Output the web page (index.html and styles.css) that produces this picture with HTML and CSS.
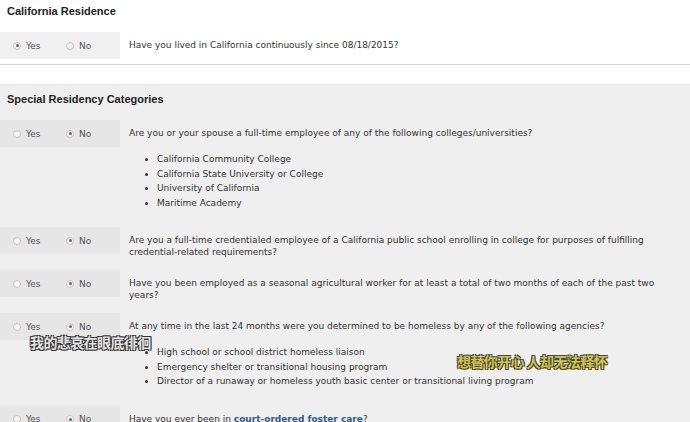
FILE: index.html
```html
<!DOCTYPE html>
<html>
<head>
<meta charset="utf-8">
<link rel="stylesheet" href="styles.css">
</head>
<body>
<div class="page">
  <section class="top">
    <h2 class="title">California Residence</h2>
    <div class="row">
      <div class="opts">
        <label class="opt"><span class="radio on"></span>Yes</label>
        <label class="opt"><span class="radio"></span>No</label>
      </div>
      <div class="q">Have you lived in California continuously since 08/18/2015?</div>
    </div>
  </section>
  <div class="gap"></div>
  <section class="grey">
    <h2 class="title">Special Residency Categories</h2>

    <div class="row">
      <div class="opts">
        <label class="opt"><span class="radio"></span>Yes</label>
        <label class="opt"><span class="radio on"></span>No</label>
      </div>
      <div class="q">Are you or your spouse a full-time employee of any of the following colleges/universities?
        <ul>
          <li>California Community College</li>
          <li>California State University or College</li>
          <li>University of California</li>
          <li>Maritime Academy</li>
        </ul>
      </div>
    </div>

    <div class="row">
      <div class="opts">
        <label class="opt"><span class="radio"></span>Yes</label>
        <label class="opt"><span class="radio on"></span>No</label>
      </div>
      <div class="q">Are you a full-time credentialed employee of a California public school enrolling in college for purposes of fulfilling credential-related requirements?</div>
    </div>

    <div class="row">
      <div class="opts">
        <label class="opt"><span class="radio"></span>Yes</label>
        <label class="opt"><span class="radio on"></span>No</label>
      </div>
      <div class="q">Have you been employed as a seasonal agricultural worker for at least a total of two months of each of the past two years?</div>
    </div>

    <div class="row">
      <div class="opts">
        <label class="opt"><span class="radio"></span>Yes</label>
        <label class="opt"><span class="radio on"></span>No</label>
      </div>
      <div class="q">At any time in the last 24 months were you determined to be homeless by any of the following agencies?
        <ul>
          <li>High school or school district homeless liaison</li>
          <li>Emergency shelter or transitional housing program</li>
          <li>Director of a runaway or homeless youth basic center or transitional living program</li>
        </ul>
      </div>
    </div>

    <div class="row">
      <div class="opts">
        <label class="opt"><span class="radio"></span>Yes</label>
        <label class="opt"><span class="radio on"></span>No</label>
      </div>
      <div class="q">Have you ever been in <a class="link" href="#">court-ordered foster care</a>?</div>
    </div>
  </section>

  <div class="sub sub1">我的悲哀在眼底徘徊</div>
  <div class="sub sub2">想替你开心 人却无法释怀</div>
</div>
</body>
</html>
```
FILE: styles.css
```css
html, body {
  margin: 0;
  padding: 0;
  background: #efefef;
}
.page {
  position: relative;
  width: 690px;
  height: 422px;
  overflow: hidden;
  font-family: "DejaVu Sans", Verdana, sans-serif;
  font-size: 9px;
  color: #333;
}
.title {
  margin: 0 0 0 7px;
  font-family: "Liberation Sans", Arial, sans-serif;
  font-weight: bold;
  font-size: 11px;
  line-height: 14px;
  color: #222;
}
.top {
  background: #fff;
  padding-top: 4px;
  padding-bottom: 5px;
  border-bottom: 1px solid #d8d8d8;
  box-shadow: 0 1px 3px rgba(0,0,0,0.15);
}
.top .title {
  margin-bottom: 14px;
}
.top .row {
  margin-bottom: 0;
}
.gap {
  height: 19px;
  background: #fff;
  border-bottom: 1px solid #e6e6e6;
}
.grey {
  background: #efefef;
  padding-top: 7px;
}
.grey .title {
  margin-bottom: 14px;
}
.row {
  display: flex;
  align-items: flex-start;
  margin-bottom: 12px;
}
.opts {
  flex: 0 0 120px;
  height: 27px;
  display: flex;
  align-items: center;
  background: #e6e6e6;
  color: #555;
}
.top .opts {
  background: #f0f0f0;
}
.opt {
  display: flex;
  align-items: center;
  line-height: 12px;
}
.opt:first-child {
  margin-left: 13px;
  width: 53px;
}
.radio {
  width: 6px;
  height: 6px;
  border: 1px solid #c4c4c4;
  border-radius: 50%;
  background: #f6f6f6;
  margin-right: 5px;
  display: flex;
  align-items: center;
  justify-content: center;
}
.radio.on::after {
  content: "";
  width: 3px;
  height: 3px;
  border-radius: 50%;
  background: #666;
}
.q {
  padding: 7px 20px 0 9px;
  line-height: 12px;
}
.q ul {
  margin: 13px 0 5px 0;
  padding-left: 28px;
}
.q li {
  line-height: 14.5px;
}
.link {
  color: #2d5c8a;
  font-weight: bold;
  text-decoration: none;
}
.sub {
  position: absolute;
  font-family: "Noto Sans CJK SC", sans-serif;
  font-weight: 700;
  white-space: nowrap;
  letter-spacing: -0.6px;
}
.sub1 {
  left: 30px;
  top: 334px;
  font-size: 14px;
  line-height: 16px;
  color: #e4e4e4;
  text-shadow: -1px -1px 0 #333, 1px -1px 0 #333, -1px 1px 0 #333, 1px 1px 0 #333;
}
.sub2 {
  left: 457px;
  top: 353px;
  font-size: 14px;
  line-height: 16px;
  color: #cfc35a;
  text-shadow: -1px -1px 0 #4a4a2a, 1px -1px 0 #4a4a2a, -1px 1px 0 #4a4a2a, 1px 1px 0 #4a4a2a;
}
```
